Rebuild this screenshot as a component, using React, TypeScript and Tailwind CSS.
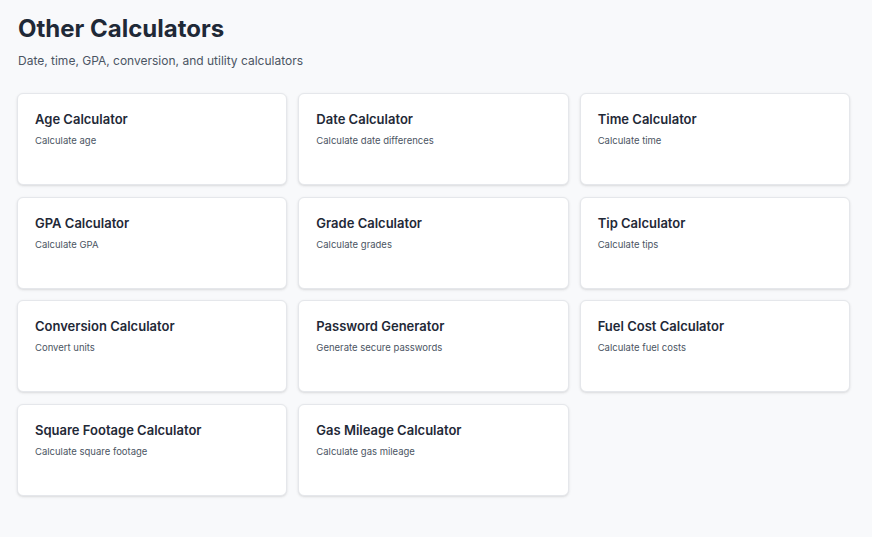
const calculators = [
  { name: 'Age Calculator', description: 'Calculate age' },
  { name: 'Date Calculator', description: 'Calculate date differences' },
  { name: 'Time Calculator', description: 'Calculate time' },
  { name: 'GPA Calculator', description: 'Calculate GPA' },
  { name: 'Grade Calculator', description: 'Calculate grades' },
  { name: 'Tip Calculator', description: 'Calculate tips' },
  { name: 'Conversion Calculator', description: 'Convert units' },
  { name: 'Password Generator', description: 'Generate secure passwords' },
  { name: 'Fuel Cost Calculator', description: 'Calculate fuel costs' },
  { name: 'Square Footage Calculator', description: 'Calculate square footage' },
  { name: 'Gas Mileage Calculator', description: 'Calculate gas mileage' }
];

export default function App() {
  return (
    <main className="min-h-screen bg-[#f8f9fb] pl-[17px] pr-[22px] pt-[14px] pb-10 font-['Inter',sans-serif]">
      <h1 className="pl-px text-[24px] font-bold leading-[30px] text-[#1f2937]">Other Calculators</h1>
      <p className="mt-[9px] pl-px text-[12px] leading-[16px] text-[#4b5563]">
        Date, time, GPA, conversion, and utility calculators
      </p>

      <div className="mt-[24px] grid grid-cols-3 gap-x-[11px] gap-y-[11.5px]">
        {calculators.map((calc) => (
          <div
            className="h-[92px] rounded-md border border-[#e5e7eb] bg-white pl-[17px] pr-4 pt-[15px] shadow-sm"
            key={calc.name}
          >
            <h2 className="text-[13px] font-semibold leading-[20px] text-[#1f2937]">{calc.name}</h2>
            <p className="mt-[5px] text-[9.5px] leading-[14px] text-[#4b5563]">{calc.description}</p>
          </div>
        ))}
      </div>
    </main>
  );
}
